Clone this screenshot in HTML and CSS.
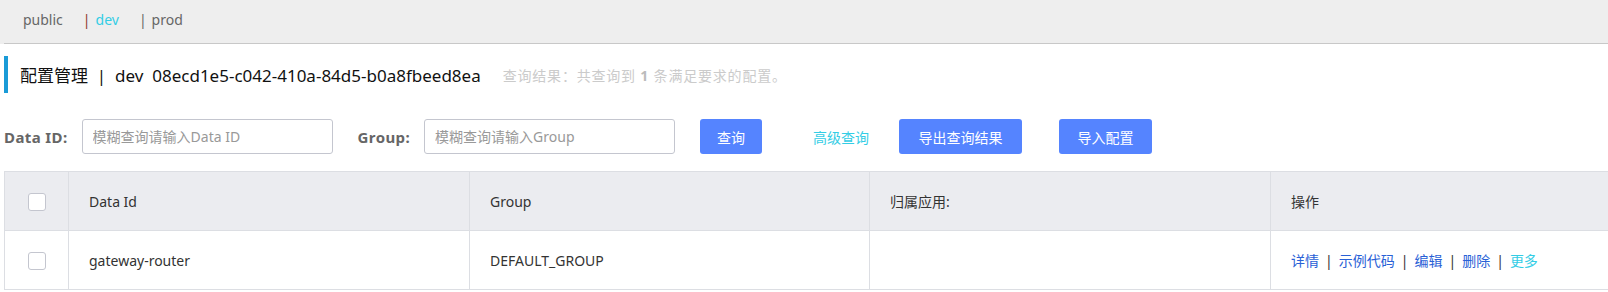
FILE: index.html
```html
<!DOCTYPE html>
<html lang="zh-CN">
<head>
    <meta charset="UTF-8">
    <title>配置管理</title>
    <link rel="stylesheet" href="styles.css">
</head>
<body>
    <div class="namespace-bar">
        <div class="namespace-list">
            <span class="ns-item">public</span>
            <span class="ns-item active"><span class="ns-sep red">|</span>dev</span>
            <span class="ns-item"><span class="ns-sep">|</span>prod</span>
        </div>
    </div>

    <div class="page-title">
        <span class="title-main">配置管理&nbsp; |&nbsp; dev&nbsp; 08ecd1e5-c042-410a-84d5-b0a8fbeed8ea</span>
        <span class="title-result">查询结果：共查询到 <b>1</b> 条满足要求的配置。</span>
    </div>

    <div class="search-form">
        <label class="form-label">Data ID:</label>
        <input class="form-input" type="text" placeholder="模糊查询请输入Data ID">
        <label class="form-label group-label">Group:</label>
        <input class="form-input" type="text" placeholder="模糊查询请输入Group">
        <button class="btn btn-query">查询</button>
        <a class="adv-link">高级查询</a>
        <button class="btn btn-export">导出查询结果</button>
        <button class="btn btn-import">导入配置</button>
    </div>

    <table class="config-table">
        <colgroup>
            <col style="width: 64px">
            <col style="width: 401px">
            <col style="width: 400px">
            <col style="width: 401px">
            <col style="width: 400px">
        </colgroup>
        <thead>
            <tr>
                <th class="check-cell"><span class="checkbox"></span></th>
                <th>Data Id</th>
                <th>Group</th>
                <th>归属应用:</th>
                <th>操作</th>
            </tr>
        </thead>
        <tbody>
            <tr>
                <td class="check-cell"><span class="checkbox"></span></td>
                <td>gateway-router</td>
                <td>DEFAULT_GROUP</td>
                <td></td>
                <td class="actions">
                    <a>详情</a><span class="sep">|</span><a>示例代码</a><span class="sep">|</span><a>编辑</a><span class="sep">|</span><a>删除</a><span class="sep">|</span><a class="more">更多</a>
                </td>
            </tr>
        </tbody>
    </table>
</body>
</html>
```

FILE: styles.css
```css
* {
    margin: 0;
    padding: 0;
    box-sizing: border-box;
}

body {
    font-family: "Noto Sans", "Noto Sans CJK SC", sans-serif;
    font-size: 14px;
    color: #333;
    background: #fff;
    overflow: hidden;
    padding-left: 4px;
}

.namespace-bar {
    background: #eee;
    margin-left: -4px;
    height: 44px;
}

.namespace-list {
    margin-left: 4px;
    height: 44px;
    padding-left: 19px;
    border-bottom: 1px solid #c8c8c8;
    display: flex;
    align-items: center;
    padding-bottom: 4px;
    color: #666;
}

.ns-item {
    margin-right: 20px;
}

.ns-item.active {
    color: #33cde5;
}

.ns-sep {
    color: #666;
    margin-right: 5px;
}

.ns-sep.red {
    color: #8e3a2a;
}

.page-title {
    margin-top: 12px;
    height: 37px;
    border-left: 4px solid #1a9bd7;
    padding-left: 12px;
    display: flex;
    align-items: center;
}

.title-main {
    font-size: 17px;
    color: #111;
}

.title-result {
    margin-left: 22px;
    font-size: 14px;
    letter-spacing: 0.8px;
    color: #cbcbcb;
}

.title-result b {
    color: #bbb;
}

.search-form {
    margin-top: 26px;
    display: flex;
    align-items: center;
    height: 35px;
}

.form-label {
    font-weight: bold;
    font-size: 15px;
    letter-spacing: 0.4px;
    color: #666;
    margin-right: 14px;
}

.group-label {
    margin-left: 25px;
}

.form-input {
    width: 251px;
    height: 35px;
    border: 1px solid #c4c6cf;
    border-radius: 3px;
    padding: 0 10px;
    font-family: inherit;
    font-size: 14px;
    color: #333;
}

.form-input::placeholder {
    color: #999;
}

.btn {
    height: 35px;
    border: none;
    border-radius: 3px;
    background: #5584ff;
    color: #fff;
    font-family: inherit;
    font-size: 14px;
    padding: 0 18px;
}

.btn-query {
    margin-left: 25px;
    width: 62px;
    padding: 0;
}

.adv-link {
    color: #33cde5;
    margin-left: 51px;
    margin-right: 30px;
}

.btn-export {
    width: 123px;
    padding: 0;
}

.btn-import {
    margin-left: 37px;
    width: 93px;
    padding: 0;
}

.config-table {
    margin-top: 17px;
    border-collapse: collapse;
    table-layout: fixed;
    width: 1666px;
}

.config-table th,
.config-table td {
    border: 1px solid #dcdee3;
    height: 59px;
    text-align: left;
    font-weight: normal;
    padding: 0 20px;
    white-space: nowrap;
}

.config-table th {
    background: #ebecf0;
}

.config-table .check-cell {
    padding: 0;
    text-align: center;
}

.checkbox {
    display: inline-block;
    width: 18px;
    height: 18px;
    border: 1px solid #c4c6cf;
    border-radius: 3px;
    background: #fff;
    vertical-align: middle;
}

.actions a {
    color: #2961d6;
}

.actions a.more {
    color: #33cde5;
}

.actions .sep {
    color: #333;
    margin: 0 6px;
}
```
